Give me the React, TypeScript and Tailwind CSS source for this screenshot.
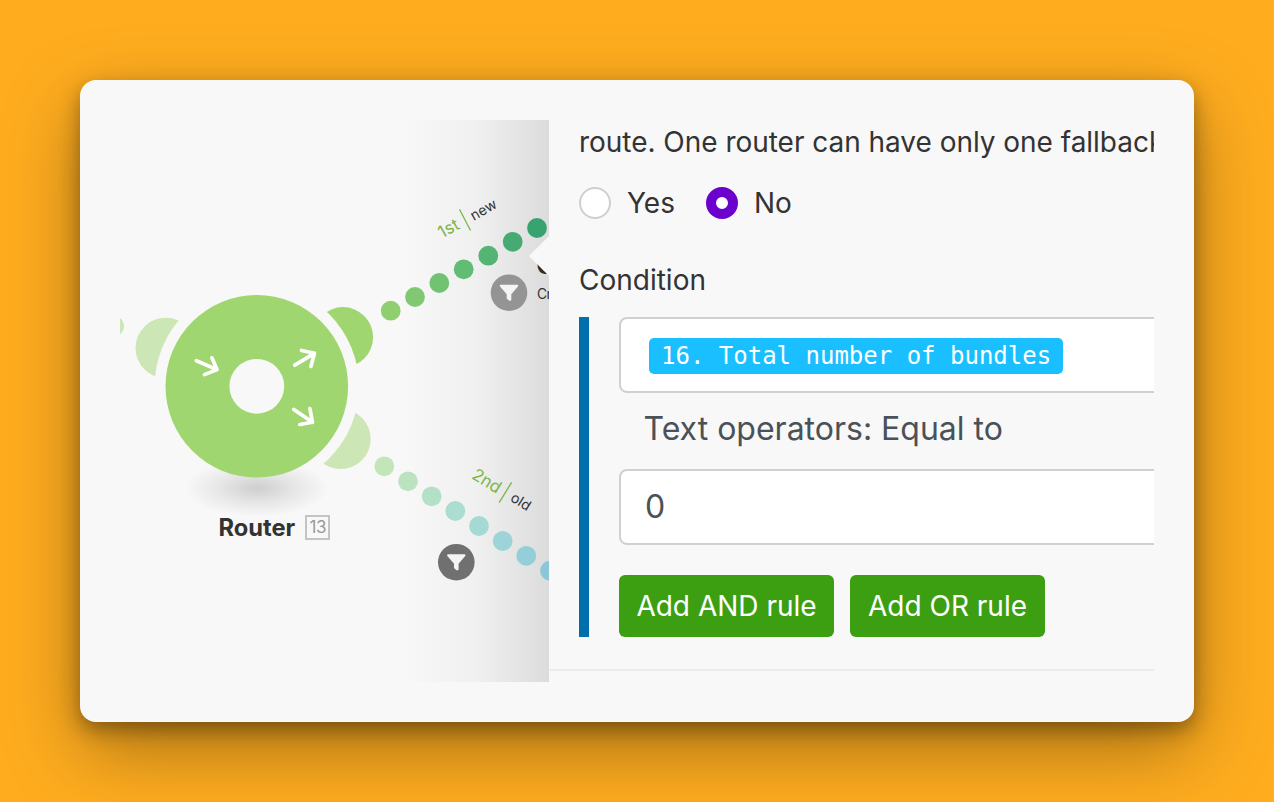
import { useState } from 'react';

type Dot = { x: number; y: number; color: string };

const firstRoute: Dot[] = [
  { x: 390.7, y: 310.7, color: '#8fcf70' },
  { x: 415, y: 297, color: '#80c972' },
  { x: 439.3, y: 283, color: '#71c372' },
  { x: 463.7, y: 269.3, color: '#62bc73' },
  { x: 488.3, y: 255.7, color: '#53b473' },
  { x: 512.7, y: 241.8, color: '#45ab73' },
  { x: 537, y: 228, color: '#38a371' },
];

const secondRoute: Dot[] = [
  { x: 384.3, y: 466.3, color: '#c4e5b8' },
  { x: 408, y: 481.3, color: '#bce3c0' },
  { x: 431.7, y: 496.3, color: '#b4e0c8' },
  { x: 455.3, y: 511, color: '#abddd0' },
  { x: 479, y: 526, color: '#a4d9d4' },
  { x: 502.7, y: 541, color: '#9cd4d7' },
  { x: 526.3, y: 555.8, color: '#94ced9' },
  { x: 550, y: 570.7, color: '#8dc6d8' },
];

function FilterBadge({ x, y, color }: { x: number; y: number; color: string }) {
  return (
    <g transform={`translate(${x} ${y})`}>
      <circle r="18.3" fill={color} />
      <path
        d="M-8.2 -6.9H8.2L1.3 1.1V7H0.6L-1.3 5.2V1.1Z"
        fill="#f4f4f4"
        stroke="#f4f4f4"
        strokeWidth="2"
        strokeLinejoin="round"
      />
    </g>
  );
}

function RouterDiagram() {
  return (
    <svg className="block h-[562px] w-[429px]" viewBox="120 120 429 562">
      <defs>
        <radialGradient id="node-shadow">
          <stop offset="0" stopColor="#000" stopOpacity="0.17" />
          <stop offset="0.5" stopColor="#000" stopOpacity="0.075" />
          <stop offset="1" stopColor="#000" stopOpacity="0" />
        </radialGradient>
      </defs>

      {/* Ports */}
      <circle cx="114.3" cy="326.2" r="9.8" fill="#cde6b5" />
      <circle cx="165.7" cy="348" r="30.2" fill="#cde6b5" />
      <circle cx="343" cy="337.2" r="30.1" fill="#a0d670" />
      <circle cx="340.6" cy="439" r="30.1" fill="#cde6b5" />
      <circle cx="256.8" cy="386.3" r="102.2" fill="#f8f8f8" />

      {/* Router */}
      <ellipse cx="257" cy="488" rx="72" ry="29" fill="url(#node-shadow)" />
      <circle cx="256.8" cy="386.3" r="91.3" fill="#a0d670" />
      <circle cx="256.8" cy="386.3" r="27.4" fill="#f8f8f8" />
      <g fill="none" stroke="#fff" strokeWidth="3.7" strokeLinecap="round" strokeLinejoin="round">
        <path d="M196.4 360.7L217 369.6M211.9 357.8L217 369.6L204.5 374.6" />
        <path d="M294.8 365.2L314.5 353.3M301.5 350.5L314.5 353.3L310.9 366.4" />
        <path d="M293.8 409.4L312.5 422.3M309.9 408.6L312.5 422.3L299.8 424.5" />
      </g>

      {[...firstRoute, ...secondRoute].map((dot) => (
        <circle key={`${dot.x}-${dot.y}`} cx={dot.x} cy={dot.y} r="9.9" fill={dot.color} />
      ))}

      {/* Route labels */}
      <g textAnchor="middle">
        <text transform="translate(451.4 233.5) rotate(-29.5)" fontSize="17" fill="#7ab648">1st</text>
        <path d="M459.5 209.3L470.5 230.5" stroke="#7ab648" strokeWidth="1.3" />
        <text transform="translate(486 214) rotate(-29.5)" fontSize="14.2" fill="#333">new</text>
        <text transform="translate(483.8 485.8) rotate(32)" fontSize="17" fill="#7ab648">2nd</text>
        <path d="M511.7 482.3L499.2 502.7" stroke="#7ab648" strokeWidth="1.3" />
        <text transform="translate(518.3 505.8) rotate(32)" fontSize="14.2" fill="#333">old</text>
      </g>

      <FilterBadge x={509} y={292.7} color="#949494" />
      <FilterBadge x={456.3} y={562.2} color="#707070" />

      <text x="536.5" y="274.3" fontSize="24" fontWeight="700" fill="#2b2b2b">C</text>
      <text x="537" y="299" fontSize="13.8" letterSpacing="-0.5" fill="#333">Cr</text>
      <path d="M529 256L549.5 235.5V276.5Z" fill="#f8f8f8" />
    </svg>
  );
}

function Radio({ label, checked, onChange }: { label: string; checked: boolean; onChange: () => void }) {
  return (
    <button onClick={onChange} className="flex items-center gap-4">
      <span
        className={`box-border size-8 shrink-0 rounded-full bg-white
          ${checked ? 'border-10 border-[#6c00cc]' : 'border-2 border-[#cfcfcf]'}
        `}
      />
      <span className="text-[28px] leading-8">{label}</span>
    </button>
  );
}

export default function App() {
  const [fallback, setFallback] = useState(false);

  return (
    <div className="h-[802px] w-[1274px] overflow-hidden bg-[#ffad1f] p-20 font-['Inter',sans-serif] text-[#333]">
      <div className="h-[642px] w-[1114px] rounded-2xl bg-[#f8f8f8] p-10 shadow-[0_28px_76px_rgba(0,0,0,0.34),0_8px_20px_rgba(0,0,0,0.34)]">
        <div className="flex h-[562px] overflow-hidden">
          {/* Scenario canvas */}
          <div className="w-[429px] shrink-0 bg-linear-to-r from-[#f8f8f8] from-66% via-[#f0f0f0] via-83% to-[#dcdcdc]">
            <div className="relative">
              <RouterDiagram />
              <div className="absolute top-[395px] left-[98.5px] flex items-center gap-2.5">
                <span className="text-[23.7px] leading-6 font-bold">Router</span>
                <span className="flex h-[25px] w-[25px] items-center justify-center border-2 border-[#c4c4c4] text-[17px] tracking-tight text-[#999]">
                  13
                </span>
              </div>
            </div>
          </div>

          {/* Filter settings */}
          <div className="h-[551px] w-[605px] shrink-0 overflow-hidden border-b-2 border-[#ececec] pl-[30px] whitespace-nowrap">
            <p className="mt-1 text-[28px] leading-9 tracking-[-0.03px]">
              route. One router can have only one fallback
            </p>
            <div className="mt-[27px] flex gap-[31px]">
              <Radio label="Yes" checked={fallback} onChange={() => setFallback(true)} />
              <Radio label="No" checked={!fallback} onChange={() => setFallback(false)} />
            </div>
            <h3 className="mt-[43px] text-[28px] leading-9">Condition</h3>

            <div className="mt-[19px] flex h-80 w-[620px] flex-col border-l-10 border-[#006ead] pl-[30px] text-[#4a5157]">
              <div className="flex h-[76px] shrink-0 items-center rounded-lg border-2 border-[#d0d0d0] bg-white pl-7">
                <span className="mt-0.5 h-9 rounded-[5px] bg-[#19bfff] px-3 font-['DejaVu_Sans_Mono',monospace] text-2xl leading-9 text-white">
                  16. Total number of bundles
                </span>
              </div>
              <div className="flex h-[76px] shrink-0 items-center pb-1 pl-[24.5px] text-[32px]">
                Text operators: Equal to
              </div>
              <div className="flex h-[76px] shrink-0 items-center rounded-lg border-2 border-[#d0d0d0] bg-white pl-6 text-[32px]">
                0
              </div>
              <div className="mt-[30px] flex gap-4 text-[28px] text-white">
                <button className="h-[62px] w-[215px] rounded-md bg-[#3c9f11]">Add AND rule</button>
                <button className="h-[62px] w-[195px] rounded-md bg-[#3c9f11]">Add OR rule</button>
              </div>
            </div>
          </div>
        </div>
      </div>
    </div>
  );
}
